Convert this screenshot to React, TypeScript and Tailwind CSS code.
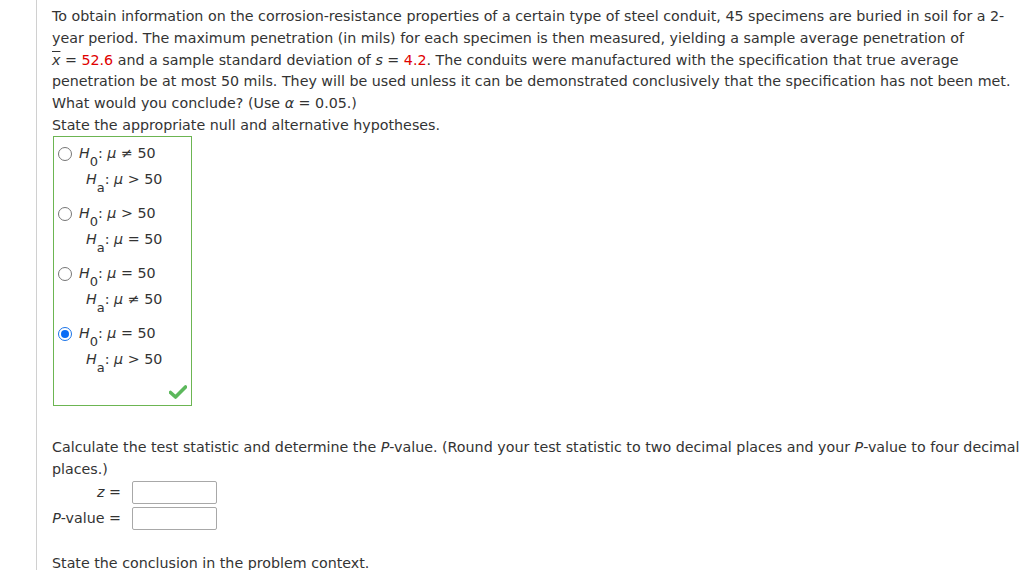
import React from 'react';

const red = 'text-[#e00000]';

function Hyp({ sub, rel, val }: { sub: string; rel: string; val: string }) {
  return (
    <span className="whitespace-nowrap">
      <i>H</i>
      <sub className="text-[13px] align-[-5px] leading-none not-italic">{sub}</sub>: <i>μ</i> {rel} {val}
    </span>
  );
}

function Radio({ checked }: { checked?: boolean }) {
  if (checked) {
    return (
      <span className="inline-flex w-[14px] h-[14px] rounded-full border-[1.5px] border-[#1a73e8] items-center justify-center">
        <span className="w-[8px] h-[8px] rounded-full bg-[#0a6cf5]" />
      </span>
    );
  }
  return <span className="inline-block w-[14px] h-[14px] rounded-full border border-[#767676] bg-white" />;
}

const options = [
  { h0: ['≠', '50'], ha: ['>', '50'] },
  { h0: ['>', '50'], ha: ['=', '50'] },
  { h0: ['=', '50'], ha: ['≠', '50'] },
  { h0: ['=', '50'], ha: ['>', '50'], checked: true },
];

export default function App() {
  return (
    <div className="min-h-screen bg-white text-[#333] text-[14.25px] leading-[21.8px] font-['DejaVu_Sans','Verdana',sans-serif]">
      <div className="ml-[36px] min-h-[570px] border-l border-[#d0d0d0] pl-[15px] pt-[6px]">
        <p className="whitespace-nowrap">
          To obtain information on the corrosion-resistance properties of a certain type of steel conduit, 45 specimens are buried in soil for a 2-
          <br />
          year period. The maximum penetration (in mils) for each specimen is then measured, yielding a sample average penetration of
          <br />
          <i className="overline">x</i> = <span className={red}>52.6</span> and a sample standard deviation of <i>s</i> ={' '}
          <span className={red}>4.2</span>. The conduits were manufactured with the specification that true average
          <br />
          penetration be at most 50 mils. They will be used unless it can be demonstrated conclusively that the specification has not been met.
          <br />
          What would you conclude? (Use <i>α</i> = 0.05.)
          <br />
          State the appropriate null and alternative hypotheses.
        </p>

        <div className="-mt-px ml-[1px] w-[139px] h-[270px] border border-[#6cb552] pt-[4px] flex flex-col">
          {options.map((o, i) => (
            <div key={i} className="mb-[8px]">
              <div className="flex items-center h-[26px] pl-[4px] gap-[7px]">
                <Radio checked={o.checked} />
                <Hyp sub="0" rel={o.h0[0]} val={o.h0[1]} />
              </div>
              <div className="flex items-center h-[26px] pl-[32px]">
                <Hyp sub="a" rel={o.ha[0]} val={o.ha[1]} />
              </div>
            </div>
          ))}
          <div className="flex justify-end pr-[4px] mt-[4px]">
            <svg width="18" height="14" viewBox="0 0 18 14">
              <path d="M1.5 7.5 L6.5 12 L16.5 2" fill="none" stroke="#5cb85c" strokeWidth="3.6" strokeLinecap="round" strokeLinejoin="round" />
            </svg>
          </div>
        </div>

        <p className="mt-[31px] whitespace-nowrap">
          Calculate the test statistic and determine the <i>P</i>-value. (Round your test statistic to two decimal places and your <i>P</i>-value to four decimal
          <br />
          places.)
        </p>

        <div className="grid grid-cols-[69px_auto] gap-x-[11px] gap-y-[3px] mt-[1px] items-center w-max">
          <span className="text-right">
            <i>z</i> =
          </span>
          <input className="w-[85px] h-[23px] border border-[#a8a8a8] rounded-[2px] bg-white" />
          <span className="text-right whitespace-nowrap">
            <i>P</i>-value =
          </span>
          <input className="w-[85px] h-[23px] border border-[#a8a8a8] rounded-[2px] bg-white" />
        </div>

        <p className="mt-[23px]">State the conclusion in the problem context.</p>
      </div>
    </div>
  );
}
